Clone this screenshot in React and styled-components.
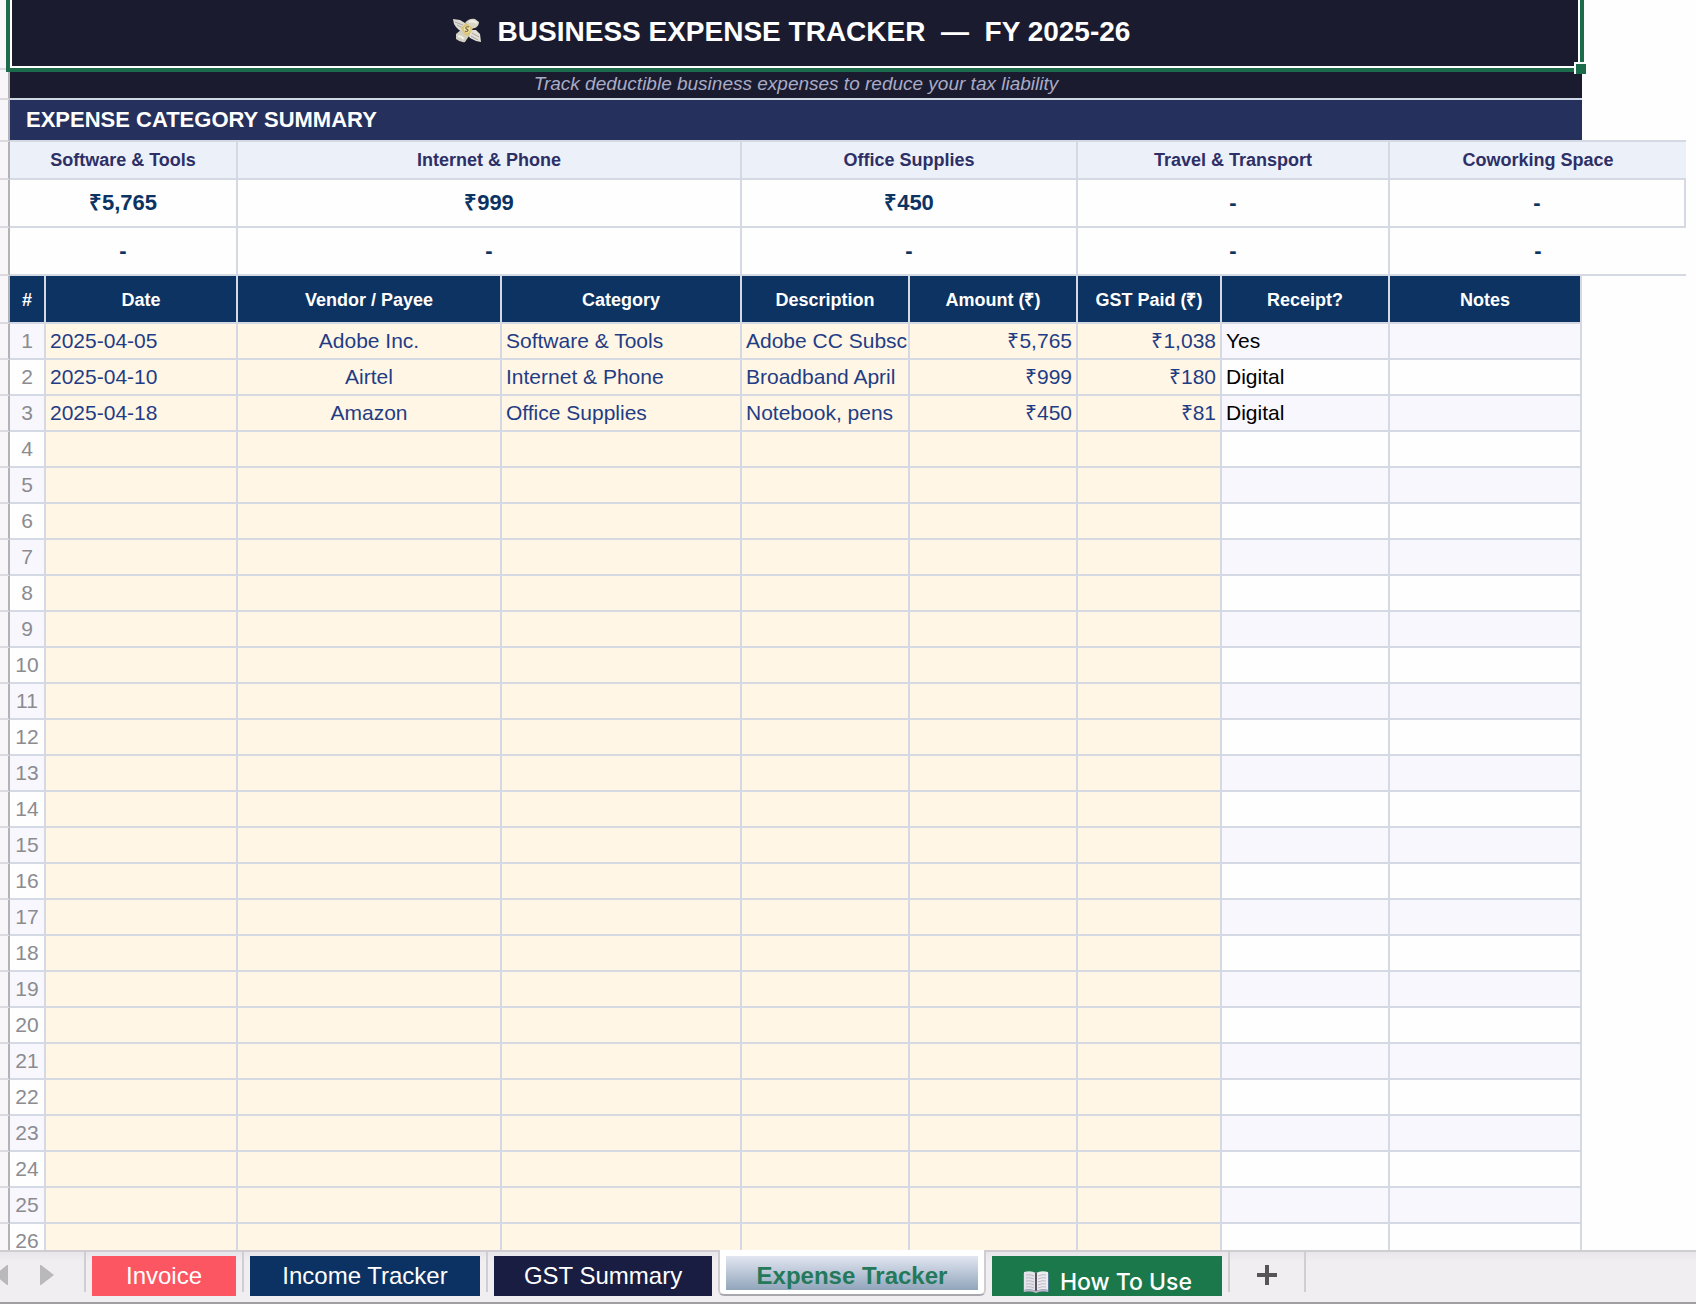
import { Fragment } from 'react';
import styled, { createGlobalStyle } from 'styled-components';

const GlobalStyle = createGlobalStyle`
  * {
    box-sizing: border-box;
  }
  body {
    margin: 0;
    background-color: #fefefe;
    font-family: "Liberation Sans", Arial, sans-serif;
  }
`

const Page = styled.div`
  height: 100vh;
  display: flex;
  flex-direction: column;
`

const Sheet = styled.main`
  flex: 1;
  min-height: 0;
  overflow: hidden;
  padding-right: 10px;
`

const Grid = styled.table`
  width: 100%;
  min-width: 1500px;
  table-layout: fixed;
  border-collapse: separate;
  border-spacing: 0;
  font-size: 21px;
  line-height: 24px;
`

const Col = styled.col`
  width: ${({ $width }) => ($width ? `${$width}px` : 'auto')};
`

const Row = styled.tr`
  height: ${({ $height }) => $height}px;
`

const Gutter = styled.td`
  padding: 0;
  background-color: #f9f6fa;
  border-right: 2px solid #b3b2b6;
  border-bottom: 2px solid #dcdade;
`

const Outside = styled.td`
  padding: 0;
  border-bottom: ${({ $line }) => ($line ? '2px solid #d5d9e3' : 'none')};
`

const TitleCell = styled.td`
  position: relative;
  padding: 0 10px 6px 0;
  background-color: #1b1b2f;
`

const Title = styled.h1`
  margin: 0;
  display: flex;
  align-items: flex-start;
  justify-content: center;
  gap: 16px;
  color: white;
  font-size: 28px;
  line-height: 32px;
  white-space: pre;
`

const Selection = styled.div`
  position: absolute;
  top: 0;
  left: -4px;
  right: -2px;
  bottom: -2px;
  border: 4px solid #1c6b4a;
  border-top: none;
  box-shadow: inset 2px 0 white, inset -2px -2px white;
  pointer-events: none;
`

const FillHandle = styled.span`
  position: absolute;
  right: -6px;
  bottom: -6px;
  width: 12px;
  height: 12px;
  background-color: #1c6b4a;
  border-left: 2px solid white;
  border-top: 2px solid white;
`

const SubtitleCell = styled.td`
  padding: 0;
  background-color: #1b1b2f;
  border-bottom: 2px solid #cfd9e5;
  color: #a9acc6;
  font-size: 19px;
  font-style: italic;
  text-align: center;
`

const SectionCell = styled.th`
  padding: 0 16px;
  background-color: #26305c;
  border-bottom: 2px solid #d5d9e3;
  color: white;
  font-size: 22px;
  text-align: left;
`

const CategoryCell = styled.th`
  padding: 0;
  background-color: #ecf0f8;
  border-right: ${({ $open }) => ($open ? 'none' : '2px solid #d5d9e3')};
  border-bottom: 2px solid #d5d9e3;
  color: #2d2f66;
  font-size: 18px;
`

const TotalCell = styled.td`
  padding: 0;
  background-color: #fefefe;
  border-right: ${({ $open }) => ($open ? 'none' : '2px solid #d5d9e3')};
  border-bottom: 2px solid #d5d9e3;
  color: #0c3362;
  font-size: 22px;
  font-weight: bold;
  text-align: center;
`

const HeadCell = styled.th`
  padding: 2px 0 0;
  background-color: #0c3362;
  border-right: 2px solid #d5d9e3;
  border-bottom: 2px solid #d5d9e3;
  color: white;
  font-size: 18px;
`

const Cell = styled.td`
  padding: 0 4px;
  overflow: hidden;
  white-space: nowrap;
  background-color: ${({ $input, $odd }) => ($input ? '#fff6e6' : $odd ? '#f8f7fd' : '#fefefe')};
  border-right: 2px solid #d5d9e3;
  border-bottom: 2px solid #d5d9e3;
  color: ${({ $color }) => $color || '#1f3d85'};
  text-align: ${({ $align }) => $align || 'left'};
`

const NumberCell = styled(Cell)`
  padding: 0;
  color: #8b8b90;
  text-align: center;
`

const TabBar = styled.nav`
  flex: none;
  height: 54px;
  display: flex;
  align-items: flex-start;
  background: linear-gradient(#e8e6ea, #f0eef1 10px);
  border-top: 2px solid #cfcdd0;
  border-bottom: 2px solid #a09ea1;
`

const Arrows = styled.div`
  width: 84px;
  height: 46px;
  display: flex;
  align-items: center;
  gap: 32px;
`

const ArrowButton = styled.button`
  display: flex;
  padding: 0;
  border: none;
  background: none;
`

const Divider = styled.span`
  width: 2px;
  height: 40px;
  background-color: #d0ced1;
`

const Tab = styled.button`
  width: ${({ $width }) => $width}px;
  height: 40px;
  margin: 4px 6px 0;
  padding: 0;
  display: flex;
  align-items: center;
  justify-content: center;
  border: none;
  background-color: ${({ $color }) => $color};
  color: white;
  font-family: "Liberation Sans", Arial, sans-serif;
  font-size: 24px;
  line-height: 28px;
  white-space: nowrap;
`

const ActiveFrame = styled.div`
  height: 46px;
  margin-top: -2px;
  padding: 6px;
  background-color: white;
  border: 2px solid #cfcdd0;
  border-top: none;
  border-bottom-color: #a9a8ae;
  border-radius: 0 0 6px 6px;
`

const ActiveTab = styled(Tab)`
  height: 34px;
  margin: 0;
  padding-top: 6px;
  background: linear-gradient(#e2e6f1, #91a5bb);
  color: #23795a;
  font-weight: bold;
`

const GuideTab = styled(Tab)`
  padding-top: 12px;
  gap: 10px;
  font-family: Inter, sans-serif;
  font-size: 23px;
  font-weight: 500;
`

const AddButton = styled.button`
  width: 74px;
  height: 46px;
  display: flex;
  align-items: center;
  justify-content: center;
  padding: 0;
  border: none;
  background: none;
`

const columns = [
  { name: '#', width: 36 },
  { name: 'Date', width: 192 },
  { name: 'Vendor / Payee', width: 264 },
  { name: 'Category', width: 240 },
  { name: 'Description', width: 168 },
  { name: 'Amount (₹)', width: 168 },
  { name: 'GST Paid (₹)', width: 144 },
  { name: 'Receipt?', width: 168 },
  { name: 'Notes' },
]

const categories = ['Software & Tools', 'Internet & Phone', 'Office Supplies', 'Travel & Transport', 'Coworking Space']
const totals = ['₹5,765', '₹999', '₹450', '-', '-']
const moreTotals = ['-', '-', '-', '-', '-']

const expenses = [
  ['2025-04-05', 'Adobe Inc.', 'Software & Tools', 'Adobe CC Subscription', '₹5,765', '₹1,038', 'Yes'],
  ['2025-04-10', 'Airtel', 'Internet & Phone', 'Broadband April', '₹999', '₹180', 'Digital'],
  ['2025-04-18', 'Amazon', 'Office Supplies', 'Notebook, pens', '₹450', '₹81', 'Digital'],
]

const rows = Array.from({ length: 26 }, (_, i) => expenses[i] || [])

function MoneyIcon() {
  return (
    <svg width="30" height="30" viewBox="0 0 30 30" aria-hidden="true">
      <path d="M1 3 L8 4 L13 7 L16 12 L11 16 L7 14 L4 11 L2 8 Z" fill="#dddbd2" />
      <path d="M3 6 L11 9 M5 9 L11 12" stroke="#aaa79e" strokeWidth="1" />
      <path d="M13 7 Q17 2 23 3 L27 6 Q27 10 23 12 L18 13 Z" fill="#d9d6c7" />
      <path d="M17 6 Q21 4 25 7" stroke="#f2f0e8" strokeWidth="2" fill="none" />
      <path d="M4 18 L10 13 L17 20 L13 26 Q9 27 4 23 Z" fill="#d4d0c0" />
      <path d="M6 20 Q9 20 12 23" stroke="#f2f0e8" strokeWidth="2" fill="none" />
      <path d="M18 14 L24 14 L28 18 L29 26 L24 25 L18 22 L15 18 Z" fill="#e0ded6" />
      <path d="M20 17 L27 21 M19 20 L26 24" stroke="#aaa79e" strokeWidth="1" />
      <path d="M9 12 L14 7 L21 12 L17 20 L13 19 Z" fill="#dcc676" />
      <path d="M12 12 Q15 8 18 12 Q19 15 15 17 Q12 16 12 12 Z" fill="#eee3b4" />
      <path d="M17 11 Q13 10 14 13 Q17 13 16 15 Q14 16 13 15" stroke="#665329" strokeWidth="1" fill="none" />
    </svg>
  )
}

function BookIcon() {
  return (
    <svg width="28" height="24" viewBox="0 0 28 24" aria-hidden="true">
      <path d="M1 3 H27 V22 H16 L14 23 L12 22 H1 Z" fill="#4d7d94" />
      <path d="M2 2 Q9 0 14 3 V21 Q8 18 2 20 Z" fill="#e4e2ea" />
      <path d="M26 2 Q19 0 14 3 V21 Q20 18 26 20 Z" fill="#edeaf0" />
      <path d="M4 5 Q8 4 12 6 M4 8 Q8 7 12 9 M4 11 Q8 10 12 12 M4 14 Q8 13 12 15 M4 17 Q8 16 12 18" stroke="#bcbac5" fill="none" />
      <path d="M24 5 Q20 4 16 6 M24 8 Q20 7 16 9 M24 11 Q20 10 16 12 M24 14 Q20 13 16 15 M24 17 Q20 16 16 18" stroke="#bcbac5" fill="none" />
      <path d="M14 3 V21" stroke="#55545f" strokeWidth="2" />
      <path d="M2 20 Q8 18 14 21 Q20 18 26 20 V22 Q20 20 14 23 Q8 20 2 22 Z" fill="#b9b6c2" />
    </svg>
  )
}

function SummaryRow({ values, open }) {
  return (
    <Row $height={48}>
      <Gutter />
      {values.map((value, i) => (
        <TotalCell key={categories[i]} colSpan={2} $open={open && i === 4}>{value}</TotalCell>
      ))}
    </Row>
  )
}

function ExpenseRow({ number, data }) {
  const [date, vendor, category, description, amount, gst, receipt] = data
  const odd = number % 2 === 1
  return (
    <Row $height={36}>
      <Gutter />
      <NumberCell $odd={odd}>{number}</NumberCell>
      <Cell $input>{date}</Cell>
      <Cell $input $align="center">{vendor}</Cell>
      <Cell $input>{category}</Cell>
      <Cell $input>{description}</Cell>
      <Cell $input $align="right">{amount}</Cell>
      <Cell $input $align="right">{gst}</Cell>
      <Cell $odd={odd} $color="black">{receipt}</Cell>
      <Cell $odd={odd} />
      <Outside />
    </Row>
  )
}

function SheetTabs() {
  const tabs = [
    { name: 'Invoice', width: 144, color: '#fb5661' },
    { name: 'Income Tracker', width: 230, color: '#0c3263' },
    { name: 'GST Summary', width: 218, color: '#191d42' },
  ]
  return (
    <TabBar aria-label="Sheets">
      <Arrows>
        <ArrowButton aria-label="Previous sheet">
          <svg width="8" height="22" viewBox="0 0 8 22"><path d="M8 1 V21 H7 L-5 11 L7 1 Z" fill="#b9b8ba" /></svg>
        </ArrowButton>
        <ArrowButton aria-label="Next sheet">
          <svg width="14" height="22" viewBox="0 0 14 22"><path d="M0 1 H1 L14 11 L1 21 H0 Z" fill="#b9b8ba" /></svg>
        </ArrowButton>
      </Arrows>
      <Divider />
      {tabs.map((tab, i) => (
        <Fragment key={tab.name}>
          {i > 0 && <Divider />}
          <Tab $width={tab.width} $color={tab.color}>{tab.name}</Tab>
        </Fragment>
      ))}
      <ActiveFrame>
        <ActiveTab $width={252} aria-current="page">Expense Tracker</ActiveTab>
      </ActiveFrame>
      <GuideTab $width={230} $color="#1a784b">
        <BookIcon />
        How To Use
      </GuideTab>
      <Divider />
      <AddButton aria-label="Add sheet">
        <svg width="20" height="20" viewBox="0 0 20 20"><path d="M10 0 V20 M0 10 H20" stroke="#555457" strokeWidth="4" /></svg>
      </AddButton>
      <Divider />
    </TabBar>
  )
}

export default function App() {
  return (
    <Page>
      <GlobalStyle />
      <Sheet>
        <Grid>
          <colgroup>
            <Col $width={10} />
            {columns.map((column) => <Col key={column.name} $width={column.width} />)}
            <Col $width={104} />
          </colgroup>
          <tbody>
            <Row $height={70}>
              <Gutter />
              <TitleCell colSpan={9}>
                <Title>
                  <MoneyIcon />
                  {'BUSINESS EXPENSE TRACKER  —  FY 2025-26'}
                </Title>
                <Selection>
                  <FillHandle />
                </Selection>
              </TitleCell>
              <Outside />
            </Row>
            <Row $height={30}>
              <Gutter />
              <SubtitleCell colSpan={9}>Track deductible business expenses to reduce your tax liability</SubtitleCell>
              <Outside />
            </Row>
            <Row $height={42}>
              <Gutter />
              <SectionCell colSpan={9}>EXPENSE CATEGORY SUMMARY</SectionCell>
              <Outside $line />
            </Row>
            <Row $height={38}>
              <Gutter />
              {categories.map((category, i) => (
                <CategoryCell key={category} colSpan={2} $open={i === 4}>{category}</CategoryCell>
              ))}
            </Row>
            <SummaryRow values={totals} />
            <SummaryRow values={moreTotals} open />
          </tbody>
          <tbody>
            <Row $height={48}>
              <Gutter />
              {columns.map((column) => <HeadCell key={column.name} scope="col">{column.name}</HeadCell>)}
              <Outside />
            </Row>
            {rows.map((data, i) => <ExpenseRow key={i} number={i + 1} data={data} />)}
          </tbody>
        </Grid>
      </Sheet>
      <SheetTabs />
    </Page>
  )
}
